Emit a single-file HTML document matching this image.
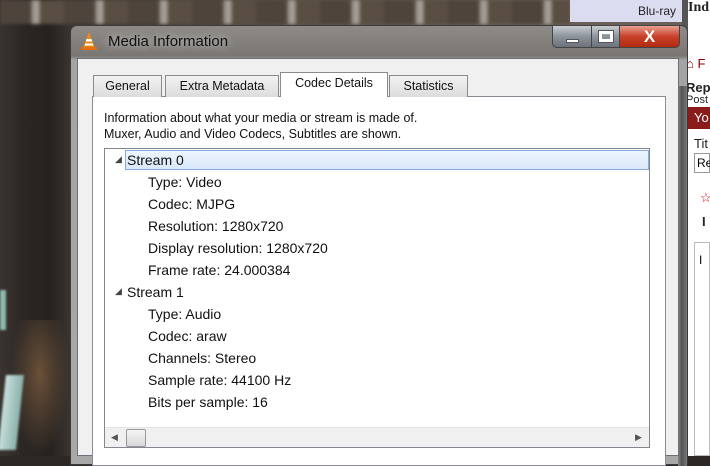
<!DOCTYPE html>
<html><head><meta charset="utf-8"><style>
*{margin:0;padding:0;box-sizing:border-box}
body{width:710px;height:456px;overflow:hidden;position:relative;font-family:"Liberation Sans",sans-serif;background:#2c2826}
.bg{position:absolute;left:0;top:0;width:710px;height:456px;background:linear-gradient(90deg,#3a3430 0,#2a2624 25px,#262220 50px,#3a3430 70px,#5a524a 300px,#6a6058 560px)}
.bars{position:absolute;left:0;top:0;width:570px;height:24px;background:repeating-linear-gradient(90deg,#4e443c 0,#4e443c 30px,#9a968e 33px,#a8a49c 38px,#5a4e44 41px,#5a4e44 64px);filter:blur(1.5px)}
.lglow{position:absolute;left:0;top:290px;width:6px;height:40px;background:#8fb8b0;filter:blur(1px)}
.lglow2{position:absolute;left:2px;top:375px;width:18px;height:75px;background:linear-gradient(90deg,#c8e0dc,#8ab0aa);transform:skewX(-6deg);filter:blur(1px)}
.brown{position:absolute;left:10px;top:320px;width:60px;height:136px;background:radial-gradient(ellipse at 50% 40%,#6a5038,transparent 70%)}
.right{position:absolute;left:688px;top:0;width:22px;height:456px;background:#fff}
.blu{position:absolute;left:570px;top:0;width:112px;height:22px;background:#dcdcf0;font-size:12px;color:#222;text-align:right;padding:4px 6px 0 0}
.blucol{position:absolute;left:682px;top:0;width:6px;height:30px;background:#555}
.frame{position:absolute;left:70px;top:25px;width:618px;height:440px;border-radius:7px 7px 0 0;border:1px solid #3a3c40;background:linear-gradient(180deg,#8e8a86 0,#7a7672 30px,#a4a4a4 34px,#a8a8a8 100%)}
.frame:after{content:"";position:absolute;right:0;top:60px;width:9px;height:380px;background:linear-gradient(90deg,#888,#555 40%,#777)}
.title{position:absolute;left:108px;top:33px;font-size:15px;color:#111;text-shadow:0 0 8px #ddd}
.client{position:absolute;left:77px;top:58px;width:602px;height:398px;background:#f0f0f0;border:1px solid #6c7078}
.tab{position:absolute;top:75px;height:22px;border:1px solid #8a8a8a;border-bottom:none;background:linear-gradient(#f2f2f2,#dcdcdc);font-size:12.5px;color:#111;text-align:center;padding-top:3px}
.tab.act{top:72px;height:25px;background:#fff;z-index:2}
.pane{position:absolute;left:92px;top:96px;width:574px;height:370px;background:#fff;border:1px solid #898c95}
.info{position:absolute;left:104px;top:110px;font-size:12.5px;color:#111;line-height:16px}
.tree{position:absolute;left:104px;top:148px;width:546px;height:300px;border:1px solid #828790;background:#fff;font-size:14px;color:#111}
.row{position:absolute;left:43px;height:22px;line-height:22px}
.hd{left:22px}
.sel{position:absolute;left:20px;top:1px;width:524px;height:20px;border:1px solid #84acdd;background:linear-gradient(#eef5fd,#d9e8fb)}
.tri{position:absolute;left:10px;font-size:9px;color:#444}
.sb{position:absolute;left:0;top:278px;width:544px;height:20px;background:#f0f0f0;border-top:1px solid #e4e4e4}
.thumb{position:absolute;left:21px;top:1px;width:20px;height:18px;border:1px solid #999;border-radius:2px;background:linear-gradient(#f4f4f4,#d8d8d8)}
.btn{position:absolute;top:25px;height:23px;border:1px solid #444;}
.rt{position:absolute;font-size:13px;color:#222}
</style></head><body>
<div class="bg"></div><div class="bars"></div><div class="brown"></div><div class="lglow"></div><div class="lglow2"></div>
<div class="blu">Blu-ray</div><div class="blucol"></div>
<div class="right">
<div class="rt" style="left:0;top:0;font-weight:bold;font-family:'Liberation Serif',serif;font-size:14px">Ind</div>
<div class="rt" style="left:-2px;top:56px;color:#800">&#8962; F</div>
<div class="rt" style="left:-2px;top:80px;font-weight:bold">Rep</div>
<div class="rt" style="left:-2px;top:94px;font-size:11px">Post</div>
<div style="position:absolute;left:-2px;top:107px;width:24px;height:22px;background:#8b1a1a;color:#fff;font-size:13px;padding:3px 0 0 8px">Yo</div>
<div class="rt" style="left:6px;top:136px">Tit</div>
<div style="position:absolute;left:6px;top:153px;width:16px;height:20px;border:1px solid #999;font-size:12px;padding:2px">Re</div>
<div class="rt" style="left:12px;top:190px;color:#c00">☆</div>
<div class="rt" style="left:14px;top:214px;font-weight:bold">I</div>
<div style="position:absolute;left:6px;top:242px;width:16px;height:214px;border:1px solid #bbb;font-size:12px;padding:10px 0 0 4px">I</div>
</div>
<div class="frame"></div>
<svg style="position:absolute;left:79px;top:31px" width="20" height="20" viewBox="0 0 20 20"><path d="M10 1 L16 17 L4 17Z" fill="#f08a10"/><path d="M7.5 8h5l.8 2.5h-6.6z M6.3 12.5h7.4l.8 2h-9z" fill="#fff"/><rect x="2" y="16" width="16" height="3" fill="#e07010"/></svg>
<div class="title">Media Information</div>
<div class="btn" style="left:552px;width:40px;border-radius:0 0 0 5px;background:linear-gradient(#c8ccd2,#8e949c 50%,#6c727a)"><div style="position:absolute;left:13px;top:13px;width:13px;height:4px;background:#fff;border:1px solid #555"></div></div>
<div class="btn" style="left:591px;width:29px;background:linear-gradient(#c8ccd2,#8e949c 50%,#6c727a)"><div style="position:absolute;left:7px;top:5px;width:14px;height:11px;border:3px solid #fff;outline:1px solid #555"></div></div>
<div class="btn" style="left:619px;width:61px;border-radius:0 0 5px 0;background:linear-gradient(#e8a090,#c84028 50%,#b02a10);color:#fff;font-weight:bold;font-size:17px;text-align:center;line-height:21px">X</div>
<div class="client"></div>
<div class="pane"></div>
<div class="tab" style="left:93px;width:69px">General</div>
<div class="tab" style="left:165px;width:114px">Extra Metadata</div>
<div class="tab act" style="left:280px;width:108px">Codec Details</div>
<div class="tab" style="left:389px;width:79px">Statistics</div>
<div class="info">Information about what your media or stream is made of.<br>Muxer, Audio and Video Codecs, Subtitles are shown.</div>
<div class="tree">
<div class="sel"></div>
<div class="tri" style="top:5px">◢</div>
<div class="row hd" style="top:0">Stream 0</div>
<div class="row" style="top:22px">Type: Video</div>
<div class="row" style="top:44px">Codec: MJPG</div>
<div class="row" style="top:66px">Resolution: 1280x720</div>
<div class="row" style="top:88px">Display resolution: 1280x720</div>
<div class="row" style="top:110px">Frame rate: 24.000384</div>
<div class="tri" style="top:137px">◢</div>
<div class="row hd" style="top:132px">Stream 1</div>
<div class="row" style="top:154px">Type: Audio</div>
<div class="row" style="top:176px">Codec: araw</div>
<div class="row" style="top:198px">Channels: Stereo</div>
<div class="row" style="top:220px">Sample rate: 44100 Hz</div>
<div class="row" style="top:242px">Bits per sample: 16</div>
<div class="sb"><div style="position:absolute;left:6px;top:4px;font-size:9px;color:#555">◀</div><div class="thumb"></div><div style="position:absolute;left:530px;top:4px;font-size:9px;color:#555">▶</div></div>
</div>
</body></html>
